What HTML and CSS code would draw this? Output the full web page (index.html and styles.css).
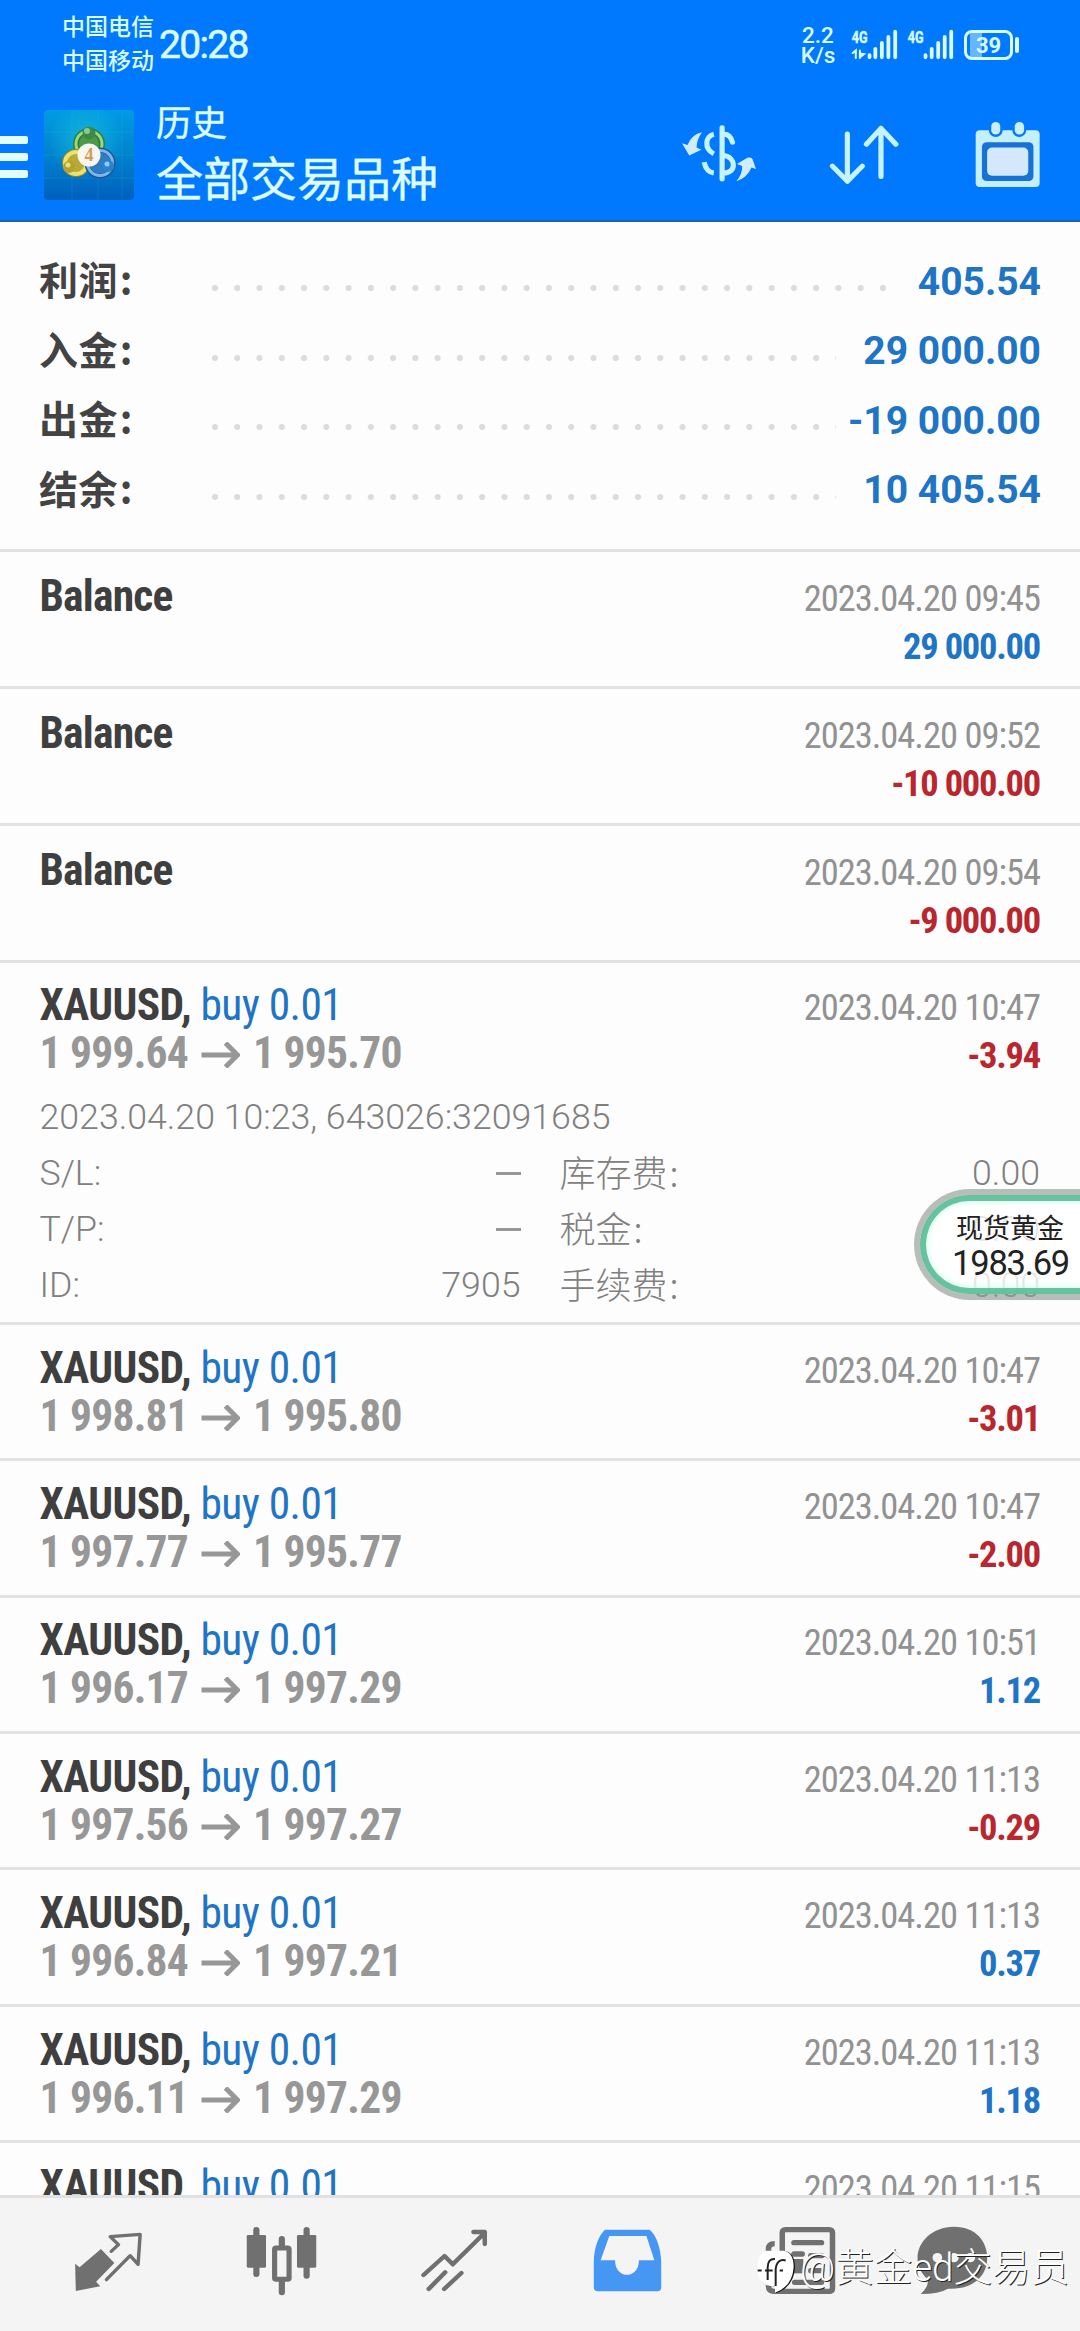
FILE: index.html
```html
<!DOCTYPE html>
<html lang="zh-CN">
<head>
<meta charset="utf-8">
<title>历史</title>
<link rel="stylesheet" href="styles.css">
</head>
<body>
<div class="screen">
  <header class="top">
    <div class="status">
      <div class="carriers"><span>中国电信</span><span>中国移动</span></div>
      <div class="clock">20:28</div>
      <div class="status-right">
        <div class="speed"><span>2.2</span><span>K/s</span></div>
        <svg class="signal" viewBox="900 84 140 94" preserveAspectRatio="none">
          <g fill="none" stroke="#d8fbff" stroke-linecap="round"><path d="M954 163V170M971 144V170M990 126V170M1009 108V170M1029 92V170" stroke-width="11"/><path d="M905 157L914 149V172M926 149V172M926 158L938 160L928 168" stroke-width="6"/></g>
          <text class="gen" x="902" y="126" textLength="46" lengthAdjust="spacingAndGlyphs">4G</text>
        </svg>
        <svg class="signal second" viewBox="1063 84 140 94" preserveAspectRatio="none">
          <path d="M1117 163V170M1135 144V170M1154 126V170M1173 108V170M1192 92V170" fill="none" stroke="#d8fbff" stroke-width="11" stroke-linecap="round"/>
          <text class="gen" x="1065" y="126" textLength="46" lengthAdjust="spacingAndGlyphs">4G</text>
        </svg>
        <div class="battery"><span>39</span></div>
        <i class="nub"></i>
      </div>
    </div>
    <div class="bar">
      <div class="burger"><i></i><i></i><i></i></div>
      <svg class="logo" viewBox="0 0 90 90">
        <defs>
          <linearGradient id="sky" x1="0" y1="0" x2="0" y2="1"><stop offset="0" stop-color="#009be4"/><stop offset=".5" stop-color="#0083cd"/><stop offset="1" stop-color="#005fbd"/></linearGradient>
          <radialGradient id="glow"><stop offset="0" stop-color="#18bfdd" stop-opacity=".75"/><stop offset="1" stop-color="#18c5dd" stop-opacity="0"/></radialGradient>
        </defs>
        <rect width="90" height="90" rx="4" fill="url(#sky)"/>
        <circle cx="42" cy="30" r="38" fill="url(#glow)"/>
        <path d="M0 22H90M0 45H90M0 68H90M28 0V90M54 0V90M78 0V90" stroke="#38b2e0" stroke-opacity=".2"/>
        <circle cx="45" cy="34" r="13" fill="#4c9a4a" stroke="#2f7d3c" stroke-width="6"/><circle cx="45" cy="34" r="13" fill="none" stroke="#9bd77d" stroke-width="3"/>
        <circle cx="32" cy="53" r="12" fill="#b9a93a" stroke="#8d8630" stroke-width="4"/><circle cx="32" cy="53" r="11" fill="none" stroke="#eee36a" stroke-width="4"/>
        <circle cx="56" cy="53" r="13" fill="#2f7cc0" stroke="#1c5698" stroke-width="5"/><circle cx="56" cy="53" r="12.5" fill="none" stroke="#79b8e8" stroke-width="3"/>
        <circle cx="45" cy="23" r="6.5" fill="#3c8a47"/><circle cx="25" cy="57" r="6" fill="#b3a232"/><circle cx="64" cy="56" r="6" fill="#2c83cc"/>
        <circle cx="43" cy="21" r="3" fill="#8cc98f"/><circle cx="24" cy="55" r="2.5" fill="#e9de86"/><circle cx="63" cy="54" r="2.5" fill="#8fc9f2"/>
        <circle cx="45" cy="45" r="11.5" fill="#f8f6ee"/>
        <text x="45" y="51" class="logo-number" text-anchor="middle">4</text>
      </svg>
      <div class="titles"><div class="small-title">历史</div><div class="big-title">全部交易品种</div></div>
      <div class="actions">
        <svg class="dollar" viewBox="412 374 214 172" preserveAspectRatio="none">
          <path fill="#d0ecff" d="M412 429L428 434Q440 402 470 396Q455 417 454 442L468 449L433 466ZM569 544Q587 522 586 498L571 492L601 473Q614 470 616 477L626 507L613 502Q600 534 569 544Z"/>
          <g fill="none" stroke="#c5f3ff" stroke-width="15"><path d="M528 382V537" stroke-linecap="round"/><path d="M534 402Q552 402 558 426" stroke-linecap="round"/><path d="M504 402C480 407 474 445 504 461M476 486Q482 516 504 519M532 466C570 470 570 520 532 519"/></g>
        </svg>
        <svg class="sort" viewBox="838 374 202 178" preserveAspectRatio="none"><path d="M891 401V541M848 496L891 541L934 496M988 527V384M946 431L988 384L1031 431" fill="none" stroke="#c5f3ff" stroke-width="15" stroke-linecap="round" stroke-linejoin="round"/></svg>
        <svg class="calendar" viewBox="1264 362 188 202" preserveAspectRatio="none">
          <rect x="1266" y="390" width="185" height="171" rx="12" fill="#c5efff"/><rect x="1304" y="362" width="40" height="48" rx="20" fill="#0079ff"/><rect x="1372" y="362" width="40" height="48" rx="20" fill="#0079ff"/>
          <rect x="1311" y="365" width="26" height="38" rx="13" fill="#c8efff"/><rect x="1379" y="365" width="27" height="38" rx="13" fill="#c8efff"/>
          <rect x="1284" y="426" width="149" height="117" rx="14" fill="#1672d6"/><rect x="1299" y="442" width="119" height="85" rx="14" fill="#d3e7fd"/>
        </svg>
      </div>
    </div>
  </header>

  <main class="history">
    <section class="summary">
      <div class="sum"><b>利润<s>:</s></b><i class="dots wide"></i><strong>405.54</strong></div>
      <div class="sum"><b>入金<s>:</s></b><i class="dots"></i><strong>29 000.00</strong></div>
      <div class="sum"><b>出金<s>:</s></b><i class="dots"></i><strong>-19 000.00</strong></div>
      <div class="sum"><b>结余<s>:</s></b><i class="dots"></i><strong>10 405.54</strong></div>
    </section>

    <article class="deal balance"><div class="line"><b class="name">Balance</b><span class="date">2023.04.20 09:45</span></div><div class="line"><span class="price"></span><b class="profit up">29 000.00</b></div></article>
    <article class="deal balance"><div class="line"><b class="name">Balance</b><span class="date">2023.04.20 09:52</span></div><div class="line"><span class="price"></span><b class="profit down">-10 000.00</b></div></article>
    <article class="deal balance"><div class="line"><b class="name">Balance</b><span class="date">2023.04.20 09:54</span></div><div class="line"><span class="price"></span><b class="profit down">-9 000.00</b></div></article>

    <article class="deal open">
      <div class="line"><b class="name">XAUUSD, <em>buy 0.01</em></b><span class="date">2023.04.20 10:47</span></div>
      <div class="line"><span class="price"><b>1 999.64</b><svg class="arrow" viewBox="0 0 38 26"><path d="M0 13H36M24 1L36 13L24 25"/></svg><b>1 995.70</b></span><b class="profit down">-3.94</b></div>
      <div class="details">
        <div class="opened">2023.04.20 10:23, 643026:32091685</div>
        <div class="grid">
          <span>S/L:</span><span class="val"><i class="dash"></i></span><span class="fee">库存费<s>:</s></span><span class="val">0.00</span>
          <span>T/P:</span><span class="val"><i class="dash"></i></span><span class="fee">税金<s>:</s></span><span class="val">0.00</span>
          <span>ID:</span><span class="val">7905</span><span class="fee">手续费<s>:</s></span><span class="val">0.00</span>
        </div>
      </div>
    </article>

    <article class="deal"><div class="line"><b class="name">XAUUSD, <em>buy 0.01</em></b><span class="date">2023.04.20 10:47</span></div><div class="line"><span class="price"><b>1 998.81</b><svg class="arrow" viewBox="0 0 38 26"><path d="M0 13H36M24 1L36 13L24 25"/></svg><b>1 995.80</b></span><b class="profit down">-3.01</b></div></article>
    <article class="deal"><div class="line"><b class="name">XAUUSD, <em>buy 0.01</em></b><span class="date">2023.04.20 10:47</span></div><div class="line"><span class="price"><b>1 997.77</b><svg class="arrow" viewBox="0 0 38 26"><path d="M0 13H36M24 1L36 13L24 25"/></svg><b>1 995.77</b></span><b class="profit down">-2.00</b></div></article>
    <article class="deal"><div class="line"><b class="name">XAUUSD, <em>buy 0.01</em></b><span class="date">2023.04.20 10:51</span></div><div class="line"><span class="price"><b>1 996.17</b><svg class="arrow" viewBox="0 0 38 26"><path d="M0 13H36M24 1L36 13L24 25"/></svg><b>1 997.29</b></span><b class="profit up">1.12</b></div></article>
    <article class="deal"><div class="line"><b class="name">XAUUSD, <em>buy 0.01</em></b><span class="date">2023.04.20 11:13</span></div><div class="line"><span class="price"><b>1 997.56</b><svg class="arrow" viewBox="0 0 38 26"><path d="M0 13H36M24 1L36 13L24 25"/></svg><b>1 997.27</b></span><b class="profit down">-0.29</b></div></article>
    <article class="deal"><div class="line"><b class="name">XAUUSD, <em>buy 0.01</em></b><span class="date">2023.04.20 11:13</span></div><div class="line"><span class="price"><b>1 996.84</b><svg class="arrow" viewBox="0 0 38 26"><path d="M0 13H36M24 1L36 13L24 25"/></svg><b>1 997.21</b></span><b class="profit up">0.37</b></div></article>
    <article class="deal"><div class="line"><b class="name">XAUUSD, <em>buy 0.01</em></b><span class="date">2023.04.20 11:13</span></div><div class="line"><span class="price"><b>1 996.11</b><svg class="arrow" viewBox="0 0 38 26"><path d="M0 13H36M24 1L36 13L24 25"/></svg><b>1 997.29</b></span><b class="profit up">1.18</b></div></article>
    <article class="deal"><div class="line"><b class="name">XAUUSD, <em>buy 0.01</em></b><span class="date">2023.04.20 11:15</span></div></article>
  </main>

  <nav class="tabs">
    <svg class="tab" viewBox="207 288 218 216" preserveAspectRatio="none"><path fill="#707070" d="M219 404L232 415L294 360L333 402L280 458L292 472L221 486Z"/><path fill="none" stroke="#707070" stroke-width="10" stroke-linecap="round" stroke-linejoin="round" d="M324 367L345 347L321 323L408 316L402 406L379 380L310 452"/></svg>
    <svg class="tab" viewBox="707 288 218 216" preserveAspectRatio="none"><path stroke="#707070" stroke-width="18" stroke-linecap="round" d="M743 303V435M817 330V350M817 455V490M889 303V440"/><rect x="715" y="318" width="56" height="98" rx="4" fill="#707070"/><rect x="861" y="318" width="56" height="98" rx="4" fill="#707070"/><rect x="796" y="357" width="42" height="94" rx="4" fill="#f4f4f4" stroke="#707070" stroke-width="15"/></svg>
    <svg class="tab" viewBox="1209 288 218 216" preserveAspectRatio="none"><path fill="none" stroke="#707070" stroke-width="13" stroke-linecap="round" stroke-linejoin="round" d="M1228 438L1289 381L1313 406L1406 311M1373 309H1406V345M1291 430L1243 480M1338 432L1288 480"/></svg>
    <svg class="tab" viewBox="145 288 218 216" preserveAspectRatio="none"><path fill="#4696f4" fill-rule="evenodd" d="M188 302H318C340 320 351 362 352 398V475Q352 487 340 487H168Q156 487 156 475V398C157 360 167 324 188 302ZM201 321L176 394H218C217 452 288 452 287 394H332L309 321Z"/></svg>
    <svg class="tab" viewBox="648 288 218 216" preserveAspectRatio="none"><path fill="none" stroke="#707070" stroke-width="16" d="M704 487V312Q704 302 714 302H840Q850 302 850 312V477Q850 487 840 487H680Q664 487 664 470V360Q664 344 682 344"/><path stroke="#707070" stroke-width="16" stroke-linecap="round" d="M738 341H818M738 375H762M787 380H818M787 425H818M740 460H818"/><path fill="#707070" d="M734 390H765V433H734Z"/></svg>
    <svg class="tab" viewBox="1091 288 218 216" preserveAspectRatio="none"><path fill="#707070" d="M1201 293C1268 293 1298 340 1298 386C1298 443 1254 483 1184 479Q1158 495 1105 495Q1129 472 1125 451C1060 390 1110 293 1201 293Z"/><g fill="#f4f4f4"><circle cx="1153" cy="386" r="14"/><circle cx="1201" cy="386" r="14"/><circle cx="1249" cy="386" r="14"/></g></svg>
  </nav>

  <div class="quote"><span>现货黄金</span><strong>1983.69</strong></div>
  <div class="watermark">
    <svg viewBox="50 90 114 134" preserveAspectRatio="none"><path d="M80 96H132Q164 100 164 146Q160 204 106 222L108 200Q56 208 52 150Q54 100 80 96Z" fill="#111"/><path d="M78 95H130Q160 100 160 144Q156 202 104 220L104 200Q54 206 50 150Q52 100 78 95Z" fill="#fff"/><path d="M82 182V146Q82 118 104 120M52 154H64M74 154H97M106 200V150Q110 118 136 124M118 154H128" fill="none" stroke="#222" stroke-width="6"/></svg>
    <span>@黄金ed交易员</span>
  </div>
</div>
</body>
</html>
```
FILE: styles.css
```css
* { box-sizing: border-box; }
body { margin: 0; background: #fdfdfd; font-family: Roboto, "Noto Sans CJK SC", sans-serif; }
i, em { font-style: normal; }
s { text-decoration: none; margin-left: 2px; }
svg { display: block; flex: none; }
.screen { position: relative; width: 1080px; height: 2331px; overflow: hidden; display: flex; flex-direction: column; }

.top { height: 222px; flex: none; background: #0079ff; border-bottom: 2px solid #2360a8; color: #d8fbff; }
.status { height: 89px; display: flex; align-items: center; padding-left: 62px; }
.carriers { width: 97px; display: flex; flex-direction: column; font-size: 23px; line-height: 34px; font-weight: 500; }
.clock { font-size: 39px; letter-spacing: -1.7px; line-height: 46px; font-weight: 400; -webkit-text-stroke: .6px #d8fbff; }
.status-right { margin-left: auto; margin-right: 61px; display: flex; align-items: center; }
.speed { display: flex; flex-direction: column; align-items: center; font-size: 22.5px; line-height: 20px; font-weight: 500; width: 32px; margin-right: 18px; }
.signal { width: 48px; height: 31px; margin-left: -1px; overflow: visible; }
.signal.second { margin-left: 8px; margin-right: 9px; }
.gen { font: 700 52px Roboto, sans-serif; fill: #d8fbff; stroke: #d8fbff; stroke-width: 1.5px; }
.battery { width: 49px; height: 30px; border: 3px solid #d8fbff; border-radius: 8px; background: linear-gradient(90deg, transparent 3px, #66b6ff 3px, #66b6ff 15px, transparent 15px); font-size: 22px; line-height: 25px; font-weight: 700; text-align: center; }
.nub { width: 4px; height: 16px; border-radius: 2px; background: #d8fbff; margin-left: 2px; }

.bar { height: 131px; display: flex; align-items: flex-start; }
.burger { width: 28px; padding-top: 47px; display: flex; flex-direction: column; gap: 9px; flex: none; }
.burger i { height: 8px; background: #e2fcff; border-radius: 0 2px 2px 0; }
.logo { width: 90px; height: 90px; margin: 21px 0 0 16px; }
.logo-number { font: 700 18px "Liberation Serif", serif; fill: #d29a58; }
.titles { margin-left: 22px; padding-top: 14px; color: #dcfcff; -webkit-text-stroke: .4px #dcfcff; }
.small-title { font-size: 35.5px; line-height: 42px; }
.big-title { font-size: 47px; line-height: 70px; white-space: nowrap; }
.actions { margin-left: auto; padding: 32px 40px 0 0; display: flex; align-items: flex-start; }
.dollar { width: 74px; height: 57px; margin-top: 4px; margin-right: 73px; }
.sort { width: 70px; height: 60px; margin-top: 4px; margin-right: 76px; }
.calendar { width: 65px; height: 67px; }

.history { flex: 1; min-height: 0; overflow: hidden; }
.summary { height: 326.6px; padding: 25px 39px 0 39px; }
.sum { height: 69.5px; display: flex; align-items: center; }
.sum b { width: 172px; font-family: "Noto Sans CJK SC", sans-serif; font-size: 39px; line-height: 69px; margin-top: -6px; color: #434343; letter-spacing: .4px; }
.sum strong { margin-left: auto; font-size: 39px; color: #1e74c5; }
.dots { width: 625px; height: 8px; margin-top: 13px; background: radial-gradient(circle 3.4px at 4px 4px, #dcdcdc 80%, transparent 100%) 0 0 / 22.27px 8px repeat-x; }
.dots.wide { width: 676px; }

.deal { height: 136.4px; border-top: 3px solid #e2e2e2; padding: 19.8px 40px 0 39.5px; }
.deal.balance { height: 137px; padding-top: 21px; }
.line { display: flex; justify-content: space-between; align-items: baseline; height: 48px; line-height: 48px; white-space: nowrap; font-family: "Roboto Condensed", Roboto, sans-serif; }
.name { font-size: 43.5px; letter-spacing: -.6px; color: #3f3f3f; }
.balance .name { letter-spacing: -.8px; }
.name em { font-weight: 400; color: #1e74c5; }
.date { font-size: 36.5px; letter-spacing: -1px; color: #929292; }
.profit { font-size: 36.5px; letter-spacing: -1.25px; }
.up { color: #1e74c5; }
.down { color: #b9262e; }
.price { display: flex; align-items: baseline; font-size: 43.5px; letter-spacing: -.75px; color: #979797; }
.price:empty::before { content: "\200b"; }
.arrow { width: 39px; height: 26px; margin: 0 13px 0 13px; }
.arrow path { fill: none; stroke: #979797; stroke-width: 5; }

.open.deal { height: 362.2px; }
.details { color: #808080; font-size: 35.7px; font-weight: 300; }
.opened { margin-top: 11px; line-height: 56px; }
.grid { display: grid; grid-template-columns: 180px 301px 200px 1fr; grid-auto-rows: 56px; line-height: 56px; }
.val { display: flex; justify-content: flex-end; align-items: center; }
.dash { width: 25px; height: 3px; background: #979797; }
.fee { margin: -2px 0 0 39px; white-space: nowrap; font-family: "Noto Sans CJK SC", sans-serif; font-size: 36px; }

.tabs { height: 136px; flex: none; border-top: 3px solid #e1e1e1; background: #f4f4f4; padding: 27px 60px 0 22px; display: grid; grid-template-columns: repeat(5, 173px) 133px; justify-items: center; }
.tab { width: 75px; height: 72px; }

.quote { position: absolute; left: 914px; top: 1189px; width: 190px; height: 111px; border: 6px solid rgba(150,155,150,.65); border-right: 0; border-radius: 56px 0 0 56px; background: rgba(255,255,255,.8); background-clip: padding-box; box-shadow: inset 0 0 0 6px rgba(75,180,140,.8), inset 0 0 9px 5px #b7ffe0; color: #222; padding: 16px 0 0 34px; display: flex; flex-direction: column; }
.quote span { font-size: 27px; line-height: 36px; margin-left: 2px; }
.quote strong { font-size: 34.5px; line-height: 32px; font-weight: 400; letter-spacing: -1.2px; margin-left: -2px; }
.watermark { position: absolute; left: 757px; top: 2240px; height: 56px; display: flex; align-items: center; gap: 5px; }
.watermark svg { width: 38px; height: 45px; margin-top: 6px; }
.watermark span { font-size: 38.5px; line-height: 56px; font-weight: 300; color: #fff; text-shadow: 1px 1px 0 #222; white-space: nowrap; }
```
